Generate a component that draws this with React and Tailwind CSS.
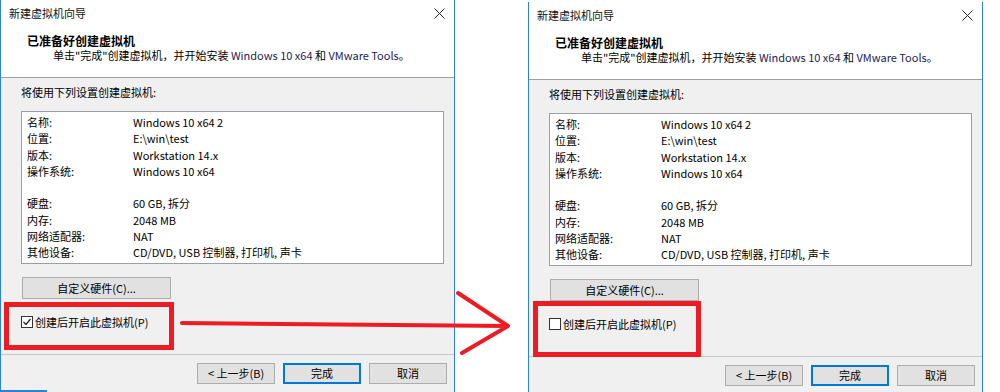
const rows = [
    ["名称:", "Windows 10 x64 2"],
    ["位置:", "E:\\win\\test"],
    ["版本:", "Workstation 14.x"],
    ["操作系统:", "Windows 10 x64"],
    ["", ""],
    ["硬盘:", "60 GB, 拆分"],
    ["内存:", "2048 MB"],
    ["网络适配器:", "NAT"],
    ["其他设备:", "CD/DVD, USB 控制器, 打印机, 声卡"],
];

function WinButton({ children, primary }) {
    return (
        <div
            className={
                "w-[78px] h-[21px] flex items-center justify-center bg-[#e1e1e1] " +
                (primary ? "border-2 border-[#0078d7]" : "border border-[#adadad]")
            }
        >
            {children}
        </div>
    );
}

function Dialog({ checked, className }) {
    return (
        <div className={"w-[455px] h-[400px] shrink-0 flex flex-col border-x border-[#2b84d8] " + className}>
            {/* title bar */}
            <div className="h-[26px] bg-white flex items-center justify-between pl-[8px] pr-[9px]">
                <span className="text-[11px] leading-[14px] text-[#111]">新建虚拟机向导</span>
                <svg width="11" height="11" viewBox="0 0 11 11">
                    <path d="M0.5 0.5 L10.5 10.5 M10.5 0.5 L0.5 10.5" stroke="#222" strokeWidth="1" />
                </svg>
            </div>
            {/* header */}
            <div className="h-[52px] bg-white border-b border-[#a0a0a0] pt-[8px]">
                <div className="pl-[26px] text-[12px] leading-[14px] font-bold text-black">已准备好创建虚拟机</div>
                <div className="pl-[52px] text-[11px] leading-[15px] text-black">
                    单击"完成"创建虚拟机，并开始安装 <span className="text-[#1c1c5a]">Windows 10 x64</span> 和{" "}
                    <span className="text-[#1c1c5a]">VMware Tools</span>。
                </div>
            </div>
            {/* body */}
            <div className="h-[277px] bg-[#f0f0f0] pl-[20px] pt-[7px] border-b border-[#c8c8c8]">
                <div className="text-[11px] leading-[14px] text-black">将使用下列设置创建虚拟机:</div>
                <div className="mt-[12px] w-[423px] h-[153px] bg-white border border-[#9a9ea6] pt-[2px] pl-[5px]">
                    {rows.map(([label, value], i) => (
                        <div key={i} className="grid grid-cols-[106px_1fr] text-[11px] leading-[16.25px] h-[16.25px] text-black">
                            <span>{label}</span>
                            <span>{value}</span>
                        </div>
                    ))}
                </div>
                <div className="mt-[13px] ml-[1px] w-[149px] h-[22px] bg-[#e1e1e1] border border-[#adadad] flex items-center justify-center text-[11px] text-black">
                    自定义硬件(C)...
                </div>
                <div className="mt-[16px] flex items-center h-[13px]">
                    <div className="w-[12px] h-[12px] border border-[#333] bg-white flex items-center justify-center">
                        {checked && (
                            <svg width="10" height="10" viewBox="0 0 10 10">
                                <path d="M1.5 5 L4 7.5 L8.5 2" fill="none" stroke="#222" strokeWidth="1.2" />
                            </svg>
                        )}
                    </div>
                    <span className="ml-[2px] text-[11px] leading-[14px] text-black">创建后开启此虚拟机(P)</span>
                </div>
            </div>
            {/* footer */}
            <div className="flex-1 bg-[#f0f0f0] flex justify-end gap-[8px] pr-[7px] pt-[8px] text-[11px] text-black">
                <WinButton>&lt; 上一步(B)</WinButton>
                <WinButton primary>完成</WinButton>
                <WinButton>取消</WinButton>
            </div>
        </div>
    );
}

function App() {
    return (
        <div
            className="relative w-[1000px] h-[392px] overflow-hidden bg-white flex items-start"
            style={{ fontFamily: '"Noto Sans CJK SC", "Noto Sans", sans-serif' }}
        >
            <Dialog checked className="" />
            <Dialog checked={false} className="ml-[73px] mt-[2px]" />

            {/* annotations */}
            <div className="absolute left-[4px] top-[302px] w-[170px] h-[48px] border-[5px] border-[#ed1c24]" />
            <div className="absolute left-[533px] top-[301px] w-[168px] h-[56px] border-[5px] border-[#ed1c24]" />
            <div className="absolute left-0 top-[390px] w-[47px] h-[2px] bg-[#2b84d8]" />
            <svg className="absolute left-0 top-0" width="1000" height="392">
                <path
                    d="M182 323 L508 326 M458 293 L508 326 L462 353"
                    fill="none"
                    stroke="#ed1c24"
                    strokeWidth="4"
                    strokeLinecap="round"
                    strokeLinejoin="round"
                />
            </svg>
        </div>
    );
}

export default App;
